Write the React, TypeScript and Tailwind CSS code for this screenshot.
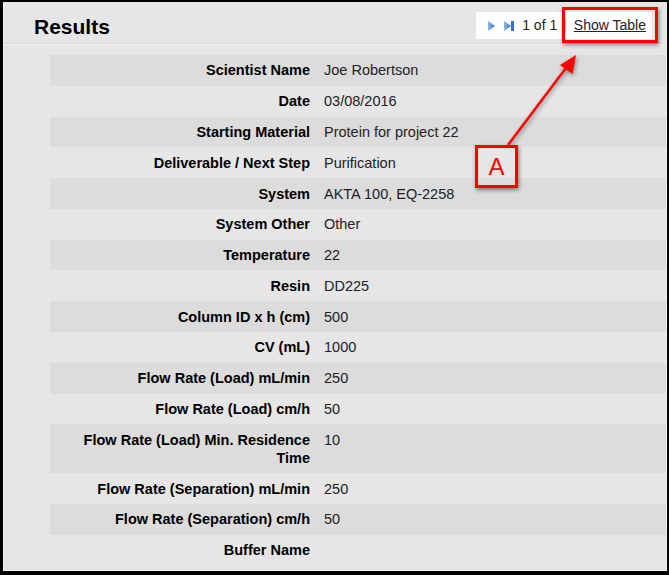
import React from "react";

type Field = { label: string; value: string };

const fields: Field[] = [
  { label: "Scientist Name", value: "Joe Robertson" },
  { label: "Date", value: "03/08/2016" },
  { label: "Starting Material", value: "Protein for project 22" },
  { label: "Deliverable / Next Step", value: "Purification" },
  { label: "System", value: "AKTA 100, EQ-2258" },
  { label: "System Other", value: "Other" },
  { label: "Temperature", value: "22" },
  { label: "Resin", value: "DD225" },
  { label: "Column ID x h (cm)", value: "500" },
  { label: "CV (mL)", value: "1000" },
  { label: "Flow Rate (Load) mL/min", value: "250" },
  { label: "Flow Rate (Load) cm/h", value: "50" },
  { label: "Flow Rate (Load) Min. Residence Time", value: "10" },
  { label: "Flow Rate (Separation) mL/min", value: "250" },
  { label: "Flow Rate (Separation) cm/h", value: "50" },
  { label: "Buffer Name", value: "" },
];

function PlayIcon() {
  return (
    <svg width="7" height="10" viewBox="0 0 7 10">
      <defs>
        <linearGradient id="pg" x1="0" y1="0" x2="1" y2="0">
          <stop offset="0" stopColor="#8db8ee" />
          <stop offset="1" stopColor="#3d70cc" />
        </linearGradient>
      </defs>
      <path d="M0 0 L7 5 L0 10 Z" fill="url(#pg)" />
    </svg>
  );
}

function LastIcon() {
  return (
    <svg width="10" height="10" viewBox="0 0 10 10">
      <defs>
        <linearGradient id="lg" x1="0" y1="0" x2="1" y2="0">
          <stop offset="0" stopColor="#8db8ee" />
          <stop offset="1" stopColor="#3d70cc" />
        </linearGradient>
      </defs>
      <path d="M0 0 L7 5 L0 10 Z" fill="url(#lg)" />
      <rect x="7" y="0" width="3" height="10" fill="#3d70cc" />
    </svg>
  );
}

export default function App() {
  return (
    <div
      className="relative w-[669px] h-[575px] overflow-hidden border-black border-t-2 border-l-[3px] border-r-2 border-b-4 bg-[#e6e6e6] text-[#222]"
      style={{ fontFamily: '"Liberation Sans", Arial, sans-serif' }}
    >
      <div className="h-full border-l border-r border-b border-[#f6f6f6]">
        {/* header */}
        <div className="flex items-start h-[42px] pl-[30px] border-b border-[#d6d6d6] shadow-[0_1px_0_#f4f4f4]">
          <h1 className="pt-[13px] text-[21px] leading-[24px] font-bold text-black">
            Results
          </h1>
          <div className="ml-auto mr-[14px] mt-[10px] h-[27px] flex items-center bg-white pl-[12px] pr-[6px] text-[14px] leading-[27px]">
            <PlayIcon />
            <span className="ml-[9px] flex">
              <LastIcon />
            </span>
            <span className="ml-[8px] text-[#222]">1 of 1</span>
            <span className="ml-[6px] text-[#aaa]">|</span>
            <a href="#" className="ml-[7px] underline text-[#222]">
              Show Table
            </a>
          </div>
        </div>

        {/* details */}
        <div className="pt-[11px] pl-[46px]">
          {fields.map((f, i) => (
            <div
              key={f.label}
              className={`flex text-[14.5px] leading-[18px] py-[6.4px] ${
                i % 2 === 0 ? "bg-[#dcdcdc]" : ""
              }`}
            >
              <div className="w-[266px] shrink-0 pr-[6px] pl-[28px] text-right font-bold text-black">
                {f.label}
              </div>
              <div className="pl-[8px] text-[#222]">{f.value}</div>
            </div>
          ))}
        </div>
      </div>

      {/* annotations */}
      <div className="absolute left-[559px] top-[5px] w-[96px] h-[36px] border-[3px] border-[#f00] shadow-[1px_2px_4px_rgba(0,0,0,0.45)]" />
      <div className="absolute left-[472px] top-[143px] w-[43px] h-[43px] border-[3px] border-[#f00] shadow-[1px_2px_4px_rgba(0,0,0,0.45)] flex items-center justify-center text-[#f00] text-[24px] leading-none">
        A
      </div>
      <svg
        className="absolute left-0 top-0 pointer-events-none"
        width="669"
        height="575"
        style={{ filter: "drop-shadow(1px 2px 2px rgba(0,0,0,0.4))" }}
      >
        <line x1="505" y1="143" x2="566" y2="62" stroke="#f00" strokeWidth="2.5" />
        <path d="M573 53 L569.5 72 L557 63 Z" fill="#f00" />
      </svg>
    </div>
  );
}
